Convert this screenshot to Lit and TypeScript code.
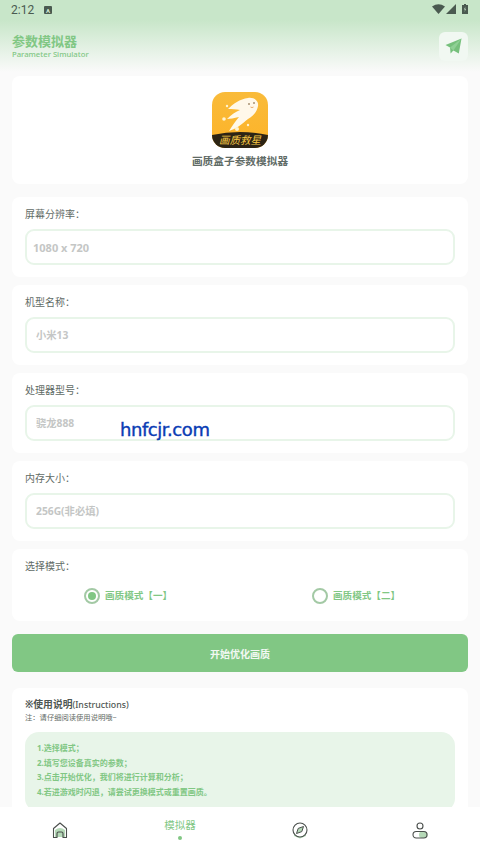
import { LitElement, css, html } from "lit";
import { customElement } from "lit/decorators.js";

const FIELDS = [
  { label: "屏幕分辨率：", hint: "1080 x 720", tight: true },
  { label: "机型名称：", hint: "小米13", tight: false },
  { label: "处理器型号：", hint: "骁龙888", tight: false },
  { label: "内存大小：", hint: "256G(非必填)", tight: false },
];

const STEPS = [
  "1.选择模式；",
  "2.填写您设备真实的参数；",
  "3.点击开始优化，我们将进行计算和分析；",
  "4.若进游戏时闪退，请尝试更换模式或重置画质。",
];

@customElement("app-root")
export class AppRoot extends LitElement {
  static styles = css`
    :host {
      display: flex;
      flex-direction: column;
      position: relative;
      height: 100vh;
      overflow: hidden;
      background: #fafafa;
      color: #5f6b66;
      font-family: "Noto Sans", "Noto Sans CJK SC", sans-serif;
    }

    .page {
      flex: 1;
      min-height: 0;
      overflow: hidden;
      background: linear-gradient(#c8e6c9 0, #c8e6c9 20px, #fafafa 72px);
    }

    .status {
      display: flex;
      align-items: center;
      height: 20px;
      padding: 0 12px 0 11px;
      color: #4a5a50;
      font-family: Roboto, sans-serif;
      font-size: 12px;
    }

    .status .time {
      width: 33px;
    }

    .status .a {
      display: grid;
      place-items: center;
      width: 8px;
      height: 8px;
      border-radius: 1px;
      background: #4a5a50;
      color: #d4ecd5;
      font-size: 6px;
      font-weight: 700;
    }

    .status .icons {
      display: flex;
      align-items: center;
      gap: 1px;
      margin: -2px 0 0 auto;
    }

    .status .icons .batt {
      margin-left: 5px;
    }

    .head {
      display: flex;
      align-items: center;
      justify-content: space-between;
      height: 41px;
      padding: 6px 12px 0;
    }

    .head h1 {
      margin: 0;
      color: #81c784;
      font-size: 13px;
      line-height: 16px;
      font-weight: 700;
    }

    .head p {
      margin: 0;
      color: #81c784;
      font-size: 7.7px;
      line-height: 11px;
      font-weight: 500;
    }

    .send {
      display: grid;
      place-items: center;
      width: 29px;
      height: 29px;
      border-radius: 6px;
      background: #f1f8f2;
    }

    .cards {
      display: flex;
      flex-direction: column;
      gap: 8px;
      padding: 9px 12px 0;
    }

    .card {
      background: #fff;
      border-radius: 8px;
    }

    .hero {
      display: flex;
      flex-direction: column;
      align-items: center;
      height: 108px;
      margin-bottom: 5px;
      padding-top: 16px;
      box-sizing: border-box;
    }

    .logo {
      position: relative;
      overflow: hidden;
      width: 56px;
      height: 56px;
      border-radius: 13px;
      background: linear-gradient(#f9bb3a, #fdb328);
    }

    .logo svg {
      display: block;
    }

    .logo span {
      position: absolute;
      left: 0;
      right: 0;
      bottom: 2px;
      color: #f8c843;
      font-size: 10.5px;
      line-height: 12px;
      font-style: italic;
      text-align: center;
    }

    .hero h2 {
      margin: 5px 0 0;
      color: #5f6b66;
      font-size: 10.7px;
      line-height: 17px;
      font-weight: 700;
    }

    .field {
      height: 80px;
      padding: 9px 13px 0;
      box-sizing: border-box;
    }

    .label {
      height: 16px;
      color: #5f6b66;
      font-size: 10px;
      line-height: 16px;
    }

    .field input {
      display: block;
      width: 100%;
      height: 36px;
      margin-top: 7px;
      padding: 0 9px;
      box-sizing: border-box;
      border: 2.5px solid #e8f5e9;
      border-radius: 9px;
      outline: none;
      background: #fff;
      font: 700 10.3px "Noto Sans", "Noto Sans CJK SC", sans-serif;
    }

    .field input.tight {
      padding-left: 6px;
      font-size: 11px;
    }

    .field input::placeholder {
      color: #c4c6c5;
      opacity: 1;
    }

    .modes {
      height: 72px;
      margin-bottom: 5px;
      padding: 9px 13px 0;
      box-sizing: border-box;
    }

    .options {
      display: grid;
      grid-template-columns: 228px 1fr;
      margin-top: 14px;
      padding-left: 59px;
    }

    .option {
      display: flex;
      align-items: center;
      gap: 5px;
      color: #81c784;
      font-size: 9.6px;
      line-height: 16px;
      font-weight: 700;
    }

    .radio {
      display: grid;
      place-items: center;
      width: 16px;
      height: 16px;
      box-sizing: border-box;
      border: 2px solid #a3c9a5;
      border-radius: 50%;
    }

    .radio.on::after {
      content: "";
      width: 8px;
      height: 8px;
      border-radius: 50%;
      background: #81c784;
    }

    .go {
      display: block;
      width: 100%;
      height: 38px;
      margin-bottom: 8px;
      padding: 0;
      border: 0;
      border-radius: 6px;
      background: #81c784;
      color: #f1f8f2;
      font: 700 10px "Noto Sans", "Noto Sans CJK SC", sans-serif;
    }

    .help {
      padding: 10px 13px;
    }

    .help h3 {
      margin: 0;
      color: #4f5753;
      font-size: 9.8px;
      line-height: 14px;
      font-weight: 700;
    }

    .help h3 span {
      font-size: 8.8px;
      font-weight: 500;
    }

    .help .note {
      margin: 0 0 9px;
      color: #5f6b66;
      font-size: 7.3px;
      line-height: 11px;
    }

    .steps {
      height: 80px;
      padding: 9px 12px;
      box-sizing: border-box;
      border-radius: 14px;
      background: #e8f5e9;
      color: #81c784;
      font-size: 8px;
      line-height: 14.5px;
      font-weight: 700;
    }

    nav {
      display: grid;
      flex: none;
      grid-template-columns: repeat(4, 1fr);
      height: 48px;
      background: #fff;
    }

    nav div {
      display: flex;
      flex-direction: column;
      align-items: center;
      padding-top: 15px;
      box-sizing: border-box;
    }

    nav .active {
      padding-top: 10px;
      color: #81c784;
      font-size: 10.5px;
      line-height: 16px;
    }

    nav .active i {
      width: 4px;
      height: 4px;
      margin-top: 3px;
      border-radius: 50%;
      background: #81c784;
    }

    .mark {
      position: absolute;
      left: 120px;
      top: 420px;
      color: #0a3cb4;
      font: 18px/20px "DejaVu Sans", sans-serif;
      letter-spacing: -0.45px;
      white-space: nowrap;
      -webkit-text-stroke: 0.4px #0a3cb4;
    }
  `;

  render() {
    return html`
      <div class="page">
        <div class="status">
          <span class="time">2:12</span>
          <span class="a">A</span>
          <span class="icons">
            <svg width="13" height="10" viewBox="0 0 13 10"><path d="M0 2.6Q6.5-2 13 2.6L6.5 10Z" fill="#4a5a50" /></svg>
            <svg width="10" height="10" viewBox="0 0 10 10"><path d="M10 0V10H0Z" fill="#4a5a50" /></svg>
            <svg class="batt" width="6" height="10" viewBox="0 0 6 10"><path d="M2 0H4V1H6V10H0V1H2Z" fill="#4a5a50" /><path d="M3.4 2.5 2 5.6H3L2.6 8 4 4.8H3Z" fill="#d4ecd5" /></svg>
          </span>
        </div>

        <header class="head">
          <div>
            <h1>参数模拟器</h1>
            <p>Parameter Simulator</p>
          </div>
          <div class="send">
            <svg width="17" height="17" viewBox="0 0 17 17">
              <path d="M16.5 0.5 0.5 7 5 9.4 5.6 15.5 8.4 12.4 13.8 15.5Z" fill="#76c07c" />
              <path d="M16.5 0.5 5 9.4 8.4 12.4Z" fill="#8fd095" />
            </svg>
          </div>
        </header>

        <main class="cards">
          <section class="card hero">
            <div class="logo">
              <svg width="56" height="56" viewBox="0 0 56 56">
                <path d="M36 6C42 5 47 9 46 14 45 20 41 24 36 27 30 32 24 37 17 39 20 34 23 30 27 25 22 26 18 27 15 27 19 23 23 20 28 18 24 17 20 17 16 17 21 12 28 7 36 6Z" fill="#fff8ea" />
                <circle cx="15" cy="14" r="1.2" fill="#fff3d1" />
                <circle cx="12" cy="27" r="1.8" fill="#fff3d1" />
                <circle cx="25" cy="37" r="2" fill="#fff3d1" />
                <circle cx="36" cy="33" r="1.2" fill="#fff3d1" />
                <circle cx="37" cy="12" r="0.8" fill="#6b4a20" />
                <circle cx="42" cy="11" r="0.8" fill="#6b4a20" />
                <path d="M38.5 15Q40 16.2 41.5 15" stroke="#e0883a" stroke-width="0.7" fill="none" />
                <path d="M0 43Q28 37 56 43V56H0Z" fill="#2c2415" />
              </svg>
              <span>画质救星</span>
            </div>
            <h2>画质盒子参数模拟器</h2>
          </section>

          ${FIELDS.map(
            (f) => html`
              <section class="card field">
                <div class="label">${f.label}</div>
                <input class=${f.tight ? "tight" : ""} placeholder=${f.hint} />
              </section>
            `
          )}

          <section class="card modes">
            <div class="label">选择模式：</div>
            <div class="options">
              <div class="option"><span class="radio on"></span>画质模式【一】</div>
              <div class="option"><span class="radio"></span>画质模式【二】</div>
            </div>
          </section>

          <button class="go">开始优化画质</button>

          <section class="card help">
            <h3>※使用说明<span>(Instructions)</span></h3>
            <p class="note">注：请仔细阅读使用说明哦~</p>
            <div class="steps">${STEPS.map((s) => html`<div>${s}</div>`)}</div>
          </section>
        </main>
      </div>

      <nav>
        <div>
          <svg width="16" height="17" viewBox="0 0 16 17">
            <path d="M3 8Q8 4 13 8V15H3Z" fill="#b5d9b7" />
            <path d="M1.5 6.5 8 1 14.5 6.5V15.5H11V11.5Q11 10 9.5 10H6.5Q5 10 5 11.5V15.5H1.5Z" fill="none" stroke="#4a4f4c" stroke-width="1.1" stroke-linejoin="round" />
          </svg>
        </div>
        <div class="active">模拟器<i></i></div>
        <div>
          <svg width="16" height="17" viewBox="0 0 16 17">
            <path d="M2 12Q8 18 14 12V14L8 16.5 2 14Z" fill="#b5d9b7" />
            <circle cx="8" cy="8" r="7" fill="none" stroke="#4a4f4c" stroke-width="1.1" />
            <path d="M11.5 4.5 9.8 9.6 4.5 11.5 6.2 6.4Z" fill="#b5d9b7" stroke="#4a4f4c" stroke-width="1" stroke-linejoin="round" />
          </svg>
        </div>
        <div>
          <svg width="16" height="17" viewBox="0 0 16 17">
            <rect x="7" y="9.5" width="8.5" height="6.5" rx="3" fill="#b5d9b7" />
            <circle cx="8" cy="4" r="3" fill="none" stroke="#4a4f4c" stroke-width="1.1" />
            <rect x="1" y="9.5" width="14" height="6.5" rx="3.2" fill="none" stroke="#4a4f4c" stroke-width="1.1" />
          </svg>
        </div>
      </nav>

      <div class="mark">hnfcjr.com</div>
    `;
  }
}
